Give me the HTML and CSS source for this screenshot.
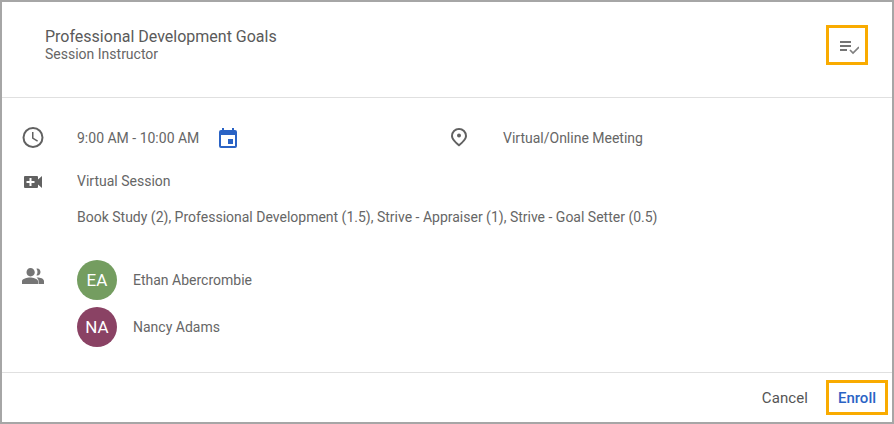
FILE: index.html
```html
<!DOCTYPE html>
<html lang="en">
<head>
<meta charset="utf-8">
<title>Professional Development Goals</title>
<link rel="stylesheet" href="styles.css">
</head>
<body>
<div class="dialog">
  <header class="head">
    <div class="titles">
      <div class="title">Professional Development Goals</div>
      <div class="subtitle">Session Instructor</div>
    </div>
    <div class="hl-icon">
      <svg class="ic" viewBox="0 0 24 24" width="24" height="24"><path fill="#757575" d="M5 8h11v2H5zM5 12h11v2H5zM5 16h7v2H5z"/><path fill="none" stroke="#808080" stroke-width="1.700" d="M15 17l3 3 6-6"/></svg>
    </div>
  </header>
  <main class="body">
    <div class="row row-time">
      <div class="cell-left">
        <svg class="ic gut" viewBox="0 0 24 24" width="24" height="24"><path fill="#616161" d="M12 1a10.500 10.500 0 1 0 0 21 10.500 10.500 0 0 0 0-21zm0 19a8.500 8.500 0 1 1 0-17 8.500 8.500 0 0 1 0 17zm.500-14H11v6.500l5.200 3.200.8-1.300-4.500-2.700z"/></svg>
        <span class="txt">9:00 AM - 10:00 AM</span>
        <svg class="ic cal" viewBox="0 0 24 24" width="24" height="24"><path fill="#2a63c5" d="M17 12h-5v5h5v-5zM16 1v2H8V1H6v2H5a2 2 0 0 0-2 2v14a2 2 0 0 0 2 2h14a2 2 0 0 0 2-2V5a2 2 0 0 0-2-2h-1V1h-2zm3 18H5V8h14v11z"/></svg>
      </div>
      <div class="cell-right">
        <svg class="ic gut2" viewBox="0 0 24 24" width="24" height="24"><path fill="#616161" d="M12 2a8 8 0 0 0-8 8c0 2.600 2.800 6.500 8 10.500 5.200-4 8-7.900 8-10.500a8 8 0 0 0-8-8zm0 16c-4-3.200-6-6-6-8 0-3.300 2.600-6 6-6s6 2.700 6 6c0 2-2 4.800-6 8z"/><circle fill="#616161" cx="12" cy="9.500" r="2"/></svg>
        <span class="txt">Virtual/Online Meeting</span>
      </div>
    </div>
    <div class="row row-video">
      <svg class="ic gut" viewBox="0 0 24 24" width="24" height="24"><path fill="#616161" fill-rule="evenodd" d="M17 10.500V8a1 1 0 0 0-1-1H4a1 1 0 0 0-1 1v10a1 1 0 0 0 1 1h12a1 1 0 0 0 1-1v-2.500l4 3.500V7zM13.500 14h-3v3h-2v-3h-3v-2h3V9h2v3h3z"/></svg>
      <span class="txt">Virtual Session</span>
    </div>
    <div class="row row-credits">
      <span class="txt credits">Book Study (2), Professional Development (1.5), Strive - Appraiser (1), Strive - Goal Setter (0.5)</span>
    </div>
    <div class="people">
      <svg class="ic gut people-ic" viewBox="0 0 24 24" width="24" height="24"><path fill="#757575" d="M16.500 11.500c1.700 0 3-1.600 3-3.500s-1.300-3.500-3-3.500c-.4 0-.8.100-1.100.2.700.9 1.100 2 1.100 3.300s-.4 2.400-1.100 3.300c.3.100.7.200 1.100.2zM9.500 12.500c2.300 0 4.300-1.900 4.300-4.200S11.800 4 9.500 4 5.500 6 5.500 8.300s1.700 4.200 4 4.200zM9 13.500c-2.700 0-8 1.200-8 3.500v3h16v-3c0-2.300-5.300-3.500-8-3.500zm7.500 0-1 .1c1.200.8 2 1.900 2 3.400v3H23v-3c0-2.400-4-3.500-6.500-3.500z"/></svg>
      <div class="list">
        <div class="person"><span class="avatar a-green">EA</span><span class="txt">Ethan Abercrombie</span></div>
        <div class="person"><span class="avatar a-plum">NA</span><span class="txt">Nancy Adams</span></div>
      </div>
    </div>
  </main>
  <footer class="foot">
    <button class="btn">Cancel</button>
    <button class="btn enroll">Enroll</button>
  </footer>
</div>
</body>
</html>
```
FILE: styles.css
```css
* { box-sizing: border-box; }
html, body { margin: 0; padding: 0; height: 100%; background: #fff; }
body { font-family: Roboto, "Liberation Sans", sans-serif; color: #424242; overflow: hidden; }
.dialog {
  width: 894px; height: 424px;
  border: 2px solid #a6a6a6;
  display: flex; flex-direction: column;
  background: #fff;
}
.ic { display: block; flex: none; }
.head {
  height: 96px;
  border-bottom: 1px solid #e0e0e0;
  display: flex; justify-content: space-between; align-items: flex-start;
  padding: 23px 24px 0 43px;
  flex: none;
}
.title { font-size: 16px; line-height: 24px; font-weight: 400; color: #5a5a5a; height: 20px; }
.subtitle { font-size: 14px; line-height: 18px; color: #666; }
.hl-icon {
  width: 42px; height: 40px;
  border: 3px solid #f9ab00;
  display: flex; align-items: center; justify-content: center;
}
.body { flex: 1; padding: 28px 0 0 19px; }
.txt { font-size: 14px; line-height: 20px; color: #666; }
.row { display: flex; align-items: center; }
.row-time { height: 24px; }
.cell-left { display: flex; align-items: center; width: 426px; }
.cell-right { display: flex; align-items: center; }
.gut { margin-right: 32px; }
.gut2 { margin-right: 32px; }
.cal { margin: 2px 0 0 17px; }
.row-video { margin-top: 19px; height: 24px; }
.row-credits { margin-top: 12px; padding-left: 56px; height: 24px; }
.people { display: flex; align-items: flex-start; margin-top: 31px; }
.people-ic { margin-top: 4px; }
.list { display: flex; flex-direction: column; gap: 7px; }
.person { display: flex; align-items: center; gap: 16px; height: 40px; }
.avatar {
  width: 40px; height: 40px; border-radius: 50%;
  color: #fff; font-size: 17px; font-weight: 400;
  display: flex; align-items: center; justify-content: center;
}
.a-green { background: #749d60; }
.a-plum { background: #8a4264; }
.foot {
  flex: none; height: 50px;
  border-top: 1px solid #e0e0e0;
  display: flex; justify-content: flex-end; align-items: center;
  padding-right: 4px;
}
.btn {
  background: none; border: 3px solid transparent;
  font-family: inherit; font-size: 15px; font-weight: 400; letter-spacing: .1px; color: #555;
  height: 35px; width: 62px; padding: 0;
}
.enroll { color: #2a63c5; font-weight: 500; letter-spacing: 0; border-color: #f9ab00; margin-left: 10px; }
```
